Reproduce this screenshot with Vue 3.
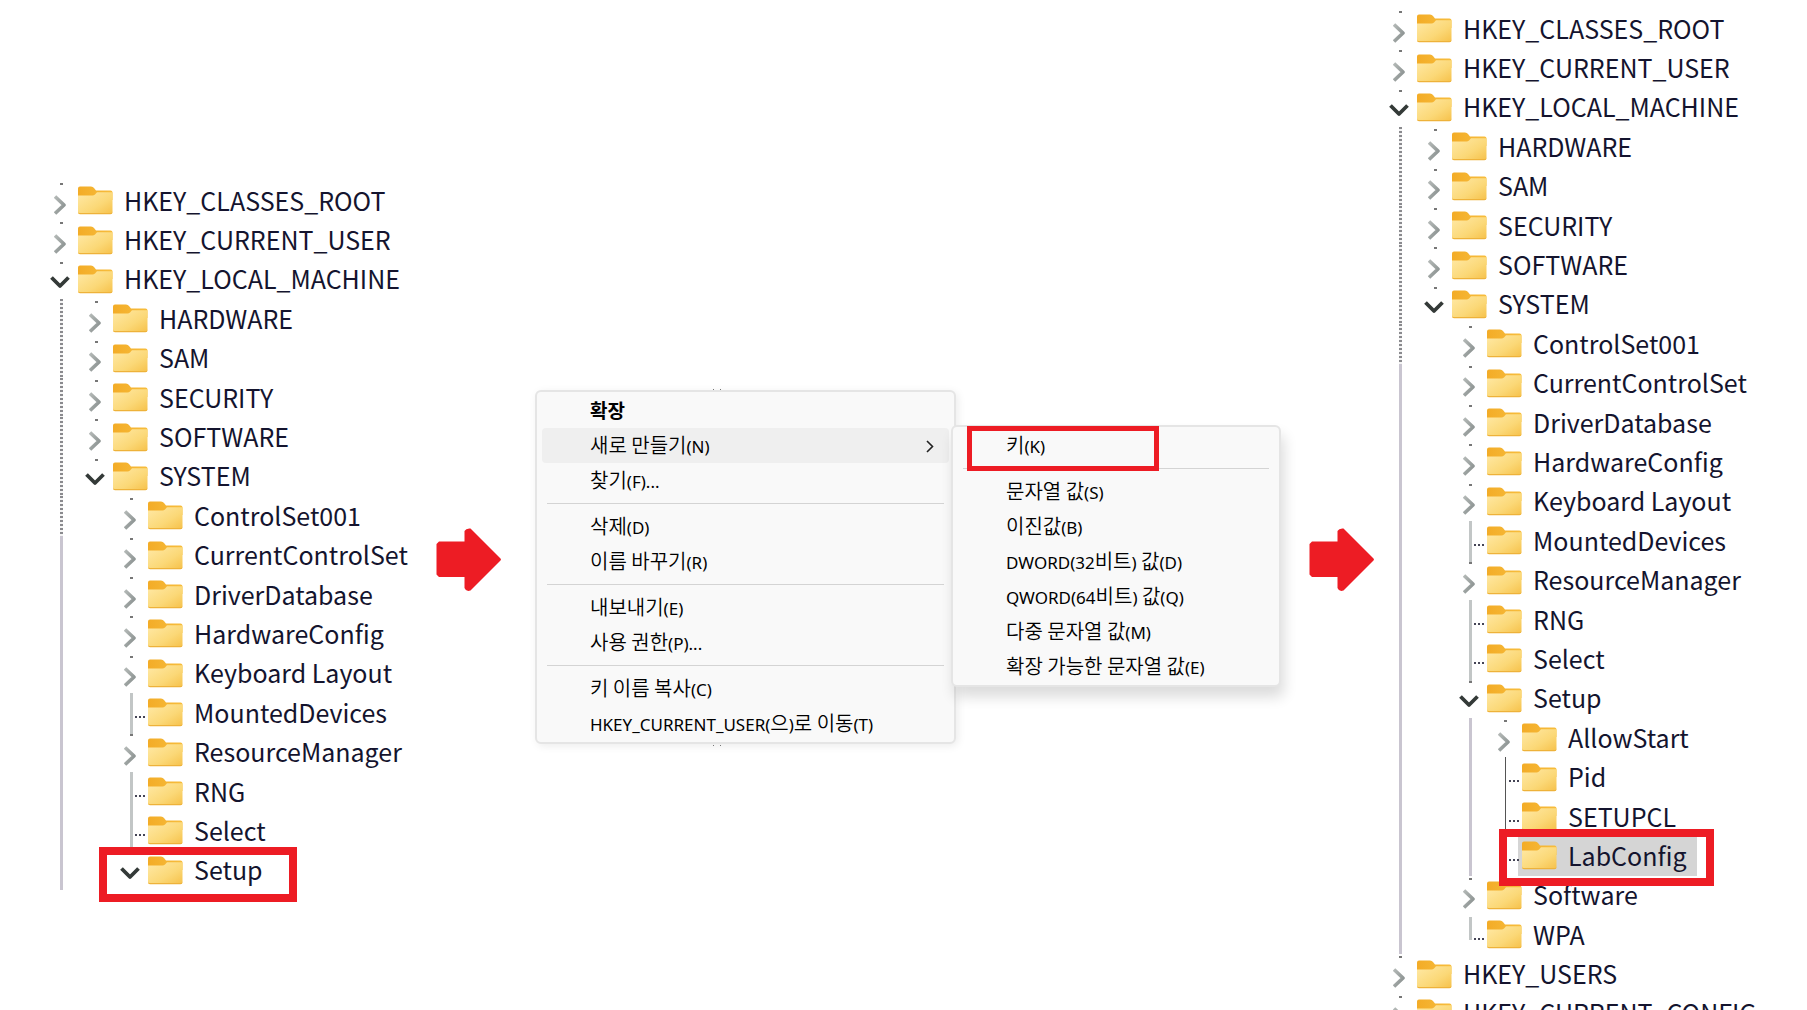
<script setup>
// guides: one letter per ancestor column — d dotted, s solid, - empty
const hives = [
  { label: 'HKEY_CLASSES_ROOT', state: 'closed', guides: '' },
  { label: 'HKEY_CURRENT_USER', state: 'closed', guides: '' },
  { label: 'HKEY_LOCAL_MACHINE', state: 'open', guides: '' },
  { label: 'HARDWARE', state: 'closed', guides: 'd' },
  { label: 'SAM', state: 'closed', guides: 'd' },
  { label: 'SECURITY', state: 'closed', guides: 'd' },
  { label: 'SOFTWARE', state: 'closed', guides: 'd' },
  { label: 'SYSTEM', state: 'open', guides: 'd' },
  { label: 'ControlSet001', state: 'closed', guides: 'd-' },
  { label: 'CurrentControlSet', state: 'closed', guides: 's-' },
  { label: 'DriverDatabase', state: 'closed', guides: 's-' },
  { label: 'HardwareConfig', state: 'closed', guides: 's-' },
  { label: 'Keyboard Layout', state: 'closed', guides: 's-' },
  { label: 'MountedDevices', state: 'leaf', guides: 's-' },
  { label: 'ResourceManager', state: 'closed', guides: 's-' },
  { label: 'RNG', state: 'leaf', guides: 's-' },
  { label: 'Select', state: 'leaf', guides: 's-' },
]

const trees = [
  {
    name: 'before',
    rows: [...hives, { label: 'Setup', state: 'open', guides: 's-', marked: true }],
  },
  {
    name: 'after',
    rows: [
      ...hives,
      { label: 'Setup', state: 'open', guides: 's-' },
      { label: 'AllowStart', state: 'closed', guides: 's-s' },
      { label: 'Pid', state: 'leaf', guides: 's-s', thin: true },
      { label: 'SETUPCL', state: 'leaf', guides: 's-s', thin: true },
      { label: 'LabConfig', state: 'leaf', guides: 's-s', thin: true, marked: true, selected: true },
      { label: 'Software', state: 'closed', guides: 's-' },
      { label: 'WPA', state: 'leaf', guides: 's-', last: true },
      { label: 'HKEY_USERS', state: 'closed', guides: '' },
      { label: 'HKEY_CURRENT_CONFIG', state: 'closed', guides: '' },
    ],
  },
]

const menuGroups = [
  [
    { label: '확장', strong: true },
    { label: '새로 만들기(N)', submenu: true },
    { label: '찾기(F)...' },
  ],
  [{ label: '삭제(D)' }, { label: '이름 바꾸기(R)' }],
  [{ label: '내보내기(E)' }, { label: '사용 권한(P)...' }],
  [{ label: '키 이름 복사(C)' }, { label: 'HKEY_CURRENT_USER(으)로 이동(T)' }],
]

const newGroups = [
  [{ label: '키(K)', marked: true }],
  [
    { label: '문자열 값(S)' },
    { label: '이진값(B)' },
    { label: 'DWORD(32비트) 값(D)' },
    { label: 'QWORD(64비트) 값(Q)' },
    { label: '다중 문자열 값(M)' },
    { label: '확장 가능한 문자열 값(E)' },
  ],
]

// Splits a label into Hangul runs (with their spaces) and Latin runs
const runs = (label) =>
  label.match(/[가-힣\s]+|[^가-힣\s]+/g).map((text) => ({ text, hangul: /[가-힣\s]/.test(text) }))
</script>

<template>
  <main class="guide">
    <svg class="defs" width="0" height="0" aria-hidden="true">
      <defs>
        <linearGradient id="tab" x1="0" y1="0" x2="1" y2="0">
          <stop offset="0" stop-color="#f3ac27" />
          <stop offset="1" stop-color="#f7bd3d" />
        </linearGradient>
        <linearGradient id="front" x1="0" y1="0" x2="1" y2="1">
          <stop offset="0" stop-color="#ffe9a6" />
          <stop offset="0.6" stop-color="#fbd877" />
          <stop offset="1" stop-color="#f6c14a" />
        </linearGradient>
        <linearGradient id="grey" x1="0" y1="0" x2="1" y2="1">
          <stop offset="0" stop-color="#b4b9b7" />
          <stop offset="1" stop-color="#878e8d" />
        </linearGradient>
      </defs>
    </svg>

    <template v-for="(tree, t) in trees" :key="tree.name">
      <ul class="tree" :class="tree.name" role="tree" :aria-label="tree.name">
        <li
          v-for="row in tree.rows"
          :key="row.label"
          class="row"
          :class="[row.state, { thin: row.thin, last: row.last, selected: row.selected }]"
          role="treeitem"
        >
          <span v-for="(g, i) in row.guides" :key="i" class="cell" :class="'guide-' + g"></span>
          <span v-if="row.state === 'leaf'" class="cell joint"></span>
          <button v-else class="cell toggle" type="button" :aria-label="row.label">
            <svg v-if="row.state === 'closed'" width="12" height="20" viewBox="0 0 12 20">
              <path d="M1 1.5 L10 10 L1 18.5" fill="none" stroke="url(#grey)" stroke-width="3.6" stroke-linejoin="round" />
            </svg>
            <svg v-else width="20" height="13" viewBox="0 0 20 13">
              <path d="M1.5 1.5 L10 10 L18.5 1.5" fill="none" stroke="#343a38" stroke-width="3.8" stroke-linejoin="round" />
            </svg>
          </button>
          <span class="key">
            <svg class="folder" width="35" height="29" viewBox="0 0 35 29">
              <path d="M0 2.5 Q0 0.5 2 0.5 H13 Q15 0.5 16 2 L18 4.5 H32.5 Q34.5 4.5 34.5 6.5 V14 H0 Z" fill="url(#tab)" />
              <path d="M0 9.5 H14.5 Q16 9.5 17 8.5 L19 6.2 H34.5 V26 Q34.5 28 32.5 28 H2 Q0 28 0 26 Z" fill="url(#front)" />
              <path d="M0 25.5 V26 Q0 28.3 2 28.3 H32.5 Q34.5 28.3 34.5 26 V25.5 Q34.5 27 32.5 27 H2 Q0 27 0 25.5 Z" fill="#eeb23a" />
            </svg>
            <span class="name">{{ row.label }}</span>
          </span>
          <span v-if="row.marked" class="mark"></span>
        </li>
      </ul>

      <template v-if="t === 0">
        <svg class="arrow" width="66" height="64" viewBox="0 0 66 64" aria-hidden="true">
          <path
            d="M3 13.5 H28.5 V3 Q30 0 34.5 0.5 L64.5 30.5 Q65.5 31.5 64.5 32.5 L34.5 62.5 Q30 64 28.5 60 V49 H3 L0.5 46.5 V16 Z"
            fill="#ed1c24"
          />
        </svg>

        <div class="menus">
          <div class="menu main-menu" role="menu">
            <div v-for="(group, g) in menuGroups" :key="g" class="group">
              <button
                v-for="item in group"
                :key="item.label"
                type="button"
                role="menuitem"
                class="item"
                :class="{ strong: item.strong, active: item.submenu }"
              >
                <span><span v-for="(run, r) in runs(item.label)" :key="r" :class="{ hangul: run.hangul }">{{ run.text }}</span></span>
                <svg v-if="item.submenu" width="8" height="13" viewBox="0 0 8 13">
                  <path d="M1 1 L6.5 6.5 L1 12" fill="none" stroke="#222" stroke-width="1.6" />
                </svg>
              </button>
            </div>
          </div>
          <div class="menu submenu" role="menu">
            <div v-for="(group, g) in newGroups" :key="g" class="group">
              <button v-for="item in group" :key="item.label" type="button" role="menuitem" class="item">
                <span><span v-for="(run, r) in runs(item.label)" :key="r" :class="{ hangul: run.hangul }">{{ run.text }}</span></span>
                <span v-if="item.marked" class="mark"></span>
              </button>
            </div>
          </div>
        </div>

        <svg class="arrow" width="66" height="64" viewBox="0 0 66 64" aria-hidden="true">
          <path
            d="M3 13.5 H28.5 V3 Q30 0 34.5 0.5 L64.5 30.5 Q65.5 31.5 64.5 32.5 L34.5 62.5 Q30 64 28.5 60 V49 H3 L0.5 46.5 V16 Z"
            fill="#ed1c24"
          />
        </svg>
      </template>
    </template>
  </main>
</template>

<style>
body {
  margin: 0;
  background: #fff;
}
</style>

<style scoped>
.guide {
  display: grid;
  grid-template-columns: 393fr 99fr 774fr 73fr 425fr;
  align-items: start;
  box-sizing: border-box;
  height: 100vh;
  padding-left: 43px;
  overflow: hidden;
  font-family: "Noto Sans CJK KR", sans-serif;
}

.defs {
  position: absolute;
}

.tree {
  display: flex;
  flex-direction: column;
  margin: 0;
  padding: 0;
  list-style: none;
}

.before {
  height: 709px;
  margin-top: 181px;
}

.after {
  height: 1024px;
  margin-top: 9px;
}

.row {
  position: relative;
  display: flex;
  flex: 1;
  align-items: stretch;
}

.cell {
  position: relative;
  flex: none;
  box-sizing: border-box;
  width: 35px;
}

.guide-d::before,
.guide-s::before {
  content: "";
  position: absolute;
  top: 0;
  bottom: 0;
  left: 17px;
  width: 3px;
}

.guide-d::before {
  background: repeating-linear-gradient(#8a8a8e 0 2px, #f4f4f4 2px 4px);
}

.guide-s::before {
  background: #c9c5d0;
}

.toggle {
  display: flex;
  align-items: center;
  justify-content: center;
  padding: 8px 2px 0 0;
  border: 0;
  background: none;
}

.open .toggle {
  padding-top: 7px;
}

.toggle::before {
  content: "";
  position: absolute;
  top: 2px;
  left: 17px;
  width: 3px;
  height: 2px;
  background: #777;
}

.joint::before {
  content: "";
  position: absolute;
  top: 0;
  bottom: -3px;
  left: 17px;
  width: 3px;
  background: #c2c6c6;
}

.joint::after {
  content: "";
  position: absolute;
  top: 23px;
  left: 22px;
  width: 10px;
  height: 2px;
  background: repeating-linear-gradient(90deg, #445 0 2px, #fff 2px 4px);
}

.thin .joint::before {
  left: 18px;
  width: 1px;
  background: #555;
}

.selected .joint::before {
  display: none;
}

.last .joint::before {
  top: 2px;
  bottom: 14px;
}

.key {
  display: flex;
  align-items: center;
  gap: 11px;
}

.selected .key {
  margin-left: -4px;
  padding: 0 10px 0 4px;
  background: #d5d5d5;
}

.folder {
  flex: none;
}

.name {
  padding-bottom: 2px;
  color: #14142e;
  font-size: 25px;
  line-height: 36px;
  white-space: nowrap;
}

.mark {
  position: absolute;
  z-index: 2;
  box-sizing: border-box;
  border: 8px solid #ed1c24;
  pointer-events: none;
}

.before .mark {
  top: -4px;
  left: 56px;
  width: 198px;
  height: 55px;
}

.after .mark {
  top: -7px;
  left: 117px;
  width: 215px;
  height: 57px;
}

.arrow {
  margin-top: 528px;
}

.menus {
  position: relative;
  margin-top: 390px;
}

.menu {
  box-sizing: border-box;
  padding: 1px 5px;
  border: 2px solid #e5e5e5;
  border-radius: 6px;
  background: #f9f9f9;
}

.main-menu {
  position: relative;
  width: 421px;
  box-shadow: 2px 2px 8px rgba(0, 0, 0, 0.08);
}

.main-menu::before,
.main-menu::after {
  content: "";
  position: absolute;
  left: 176px;
  width: 6px;
  height: 1px;
  border: solid #777;
  border-width: 0 1px;
}

.main-menu::before {
  top: -3px;
}

.main-menu::after {
  bottom: -4px;
}

.submenu {
  position: absolute;
  top: 35px;
  left: 416px;
  width: 330px;
  box-shadow: 3px 10px 14px rgba(0, 0, 0, 0.14);
}

.group {
  margin: 0 5px;
}

.group + .group {
  margin-top: 5px;
  padding-top: 5px;
  border-top: 1px solid #d4d4d4;
}

.item {
  position: relative;
  display: flex;
  align-items: center;
  justify-content: space-between;
  box-sizing: border-box;
  width: calc(100% + 10px);
  height: 35px;
  margin: 0 -5px;
  padding: 1px 15px 0 48px;
  border: 0;
  border-radius: 4px;
  background: none;
  color: #000;
  font: 17px/24px "Noto Sans", sans-serif;
  text-align: left;
  white-space: pre;
}

.hangul {
  font-family: "Noto Sans CJK KR", sans-serif;
  font-size: 20px;
  font-weight: 350;
}

.strong .hangul {
  font-size: 19px;
  font-weight: 700;
}

.active {
  background: #efefef;
}

.submenu .mark {
  top: -2px;
  left: 9px;
  width: 192px;
  height: 45px;
  border-width: 5px;
}
</style>
